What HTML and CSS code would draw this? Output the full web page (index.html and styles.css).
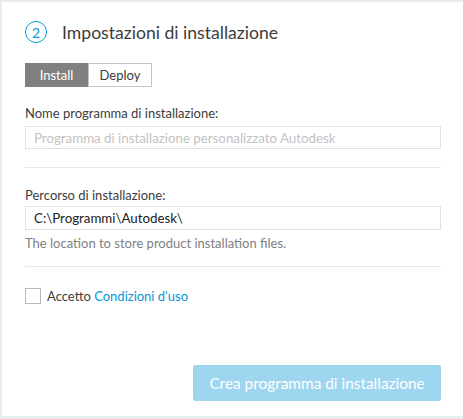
FILE: index.html
```html
<!DOCTYPE html>
<html>
<head>
<meta charset="utf-8">
<link rel="stylesheet" href="styles.css">
</head>
<body>
<div class="card">
  <div class="header">
    <span class="step">2</span>
    <h1 class="title">Impostazioni di installazione</h1>
  </div>
  <div class="tabs">
    <span class="tab active">Install</span>
    <span class="tab">Deploy</span>
  </div>
  <div class="field first">
    <label class="label">Nome programma di installazione:</label>
    <div class="input placeholder">Programma di installazione personalizzato Autodesk</div>
  </div>
  <div class="divider"></div>
  <div class="field second">
    <label class="label">Percorso di installazione:</label>
    <div class="input value">C:\Programmi\Autodesk\</div>
    <div class="help">The location to store product installation files.</div>
  </div>
  <div class="divider after-help"></div>
  <div class="terms">
    <span class="checkbox"></span>
    <span class="terms-text">Accetto <a class="link">Condizioni d'uso</a></span>
  </div>
  <div class="actions">
    <button class="primary">Crea programma di installazione</button>
  </div>
</div>
</body>
</html>
```
FILE: styles.css
```css
html, body {
  margin: 0;
  padding: 0;
  background: #e9ecef;
  width: 463px;
  height: 419px;
  overflow: hidden;
}
body {
  font-family: Lato, "Liberation Sans", sans-serif;
  color: #3c3c3c;
}
.card {
  margin: 2px 0 0 2px;
  width: 461px;
  height: 414px;
  background: #fff;
  box-sizing: border-box;
  padding: 19px 22px 0 23px;
  display: flex;
  flex-direction: column;
}
.header {
  display: flex;
  align-items: center;
  height: 22px;
}
.step {
  width: 20px;
  height: 20px;
  border: 1.3px solid #0696d7;
  border-radius: 50%;
  color: #0696d7;
  font-size: 14px;
  display: flex;
  align-items: center;
  justify-content: center;
  box-sizing: content-box;
}
.title {
  margin: 0 0 0 15px;
  font-size: 17.6px;
  font-weight: 400;
  color: #3c3c3c;
}
.tabs {
  display: flex;
  margin-top: 20px;
  height: 24px;
}
.tab {
  display: flex;
  align-items: center;
  justify-content: center;
  font-size: 13px;
  height: 24px;
  box-sizing: border-box;
  border: 1px solid #c6c6c6;
  width: 64px;
  color: #3c3c3c;
}
.tab.active {
  background: #808080;
  border-color: #808080;
  color: #fff;
  width: 63px;
}
.field {
  display: flex;
  flex-direction: column;
}
.field.first { margin-top: 18px; }
.field.second { margin-top: 19px; }
.label {
  font-size: 13px;
  color: #3c3c3c;
  line-height: 16px;
}
.input {
  height: 23px;
  box-sizing: border-box;
  border: 1px solid #e2e2e2;
  padding: 0 8px;
  display: flex;
  align-items: center;
  font-size: 13.3px;
}
.first .input { margin-top: 5px; }
.second .input { margin-top: 3px; height: 24px; }
.placeholder { color: #c3c3c3; }
.value { color: #222; }
.help {
  margin-top: 5px;
  font-size: 13px;
  color: #808080;
  line-height: 16px;
}
.divider {
  height: 1px;
  background: #e8e8e8;
  margin-top: 18px;
}
.divider.after-help { margin-top: 15px; }
.terms {
  display: flex;
  align-items: center;
  margin-top: 21px;
}
.checkbox {
  width: 16px;
  height: 16px;
  box-sizing: border-box;
  border: 1px solid #b8b8b8;
}
.terms-text {
  margin-left: 6px;
  font-size: 13px;
  color: #3c3c3c;
  line-height: 16px;
}
.link { color: #0696d7; }
.actions {
  display: flex;
  justify-content: flex-end;
  margin-top: 61px;
}
.primary {
  width: 248px;
  height: 36px;
  border: none;
  border-radius: 2px;
  background: #9fd6ef;
  color: #fff;
  font-family: inherit;
  font-size: 15.4px;
}
```
